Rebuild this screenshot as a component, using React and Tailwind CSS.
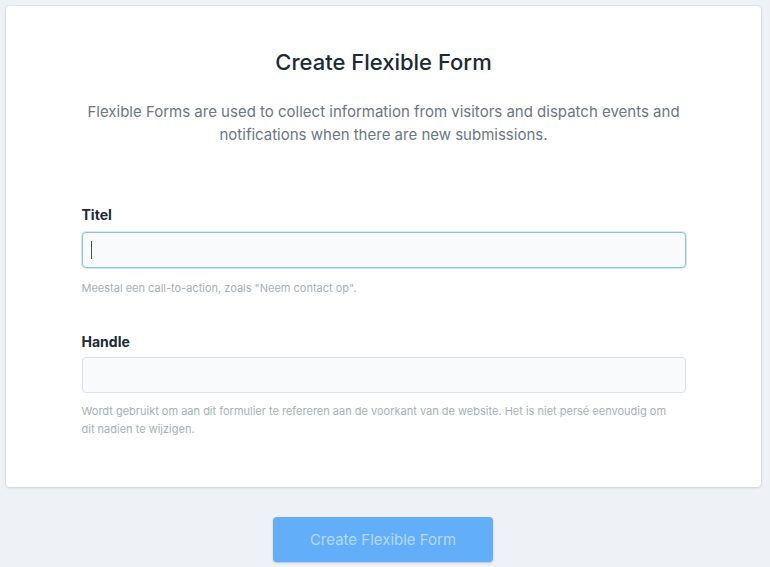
export default function App() {
  return (
    <div
      className="min-h-[567px] bg-[#eef1f5] pt-[6px] pb-[5px]"
      style={{ fontFamily: "Inter, 'Noto Sans', sans-serif" }}
    >
      <div className="ml-[6px] w-[755px] rounded-[4px] bg-white shadow-[0_0_0_1px_rgba(40,60,80,0.06),0_1px_3px_rgba(40,60,80,0.12)] pt-[41px] pb-[49px]">
        <div className="mx-auto w-[604px]">
          <h1 className="text-center text-[22px] leading-[30px] font-medium text-[#1c2a36]">
            Create Flexible Form
          </h1>
          <p className="mt-[23px] text-center text-[15px] leading-[23px] text-[#6b7785]">
            Flexible Forms are used to collect information from visitors and dispatch events and
            notifications when there are new submissions.
          </p>

          <div className="mt-[59px]">
            <label className="block text-[14px] leading-[20px] font-bold text-[#1c2a36]">
              Titel
            </label>
            <div className="mt-[7px] flex h-[36px] items-center rounded-[4px] border border-[#8cc0e6] bg-[#f9fafc] px-[8px] shadow-[0_0_0_1px_rgba(140,192,230,0.35)]">
              <span className="h-[18px] w-[1px] bg-[#44505c]" />
            </div>
            <p className="mt-[12px] text-[11px] leading-[16px] text-[#a7b0ba]">
              Meestal een call-to-action, zoals "Neem contact op".
            </p>
          </div>

          <div className="mt-[36px]">
            <label className="block text-[14px] leading-[20px] font-bold text-[#1c2a36]">
              Handle
            </label>
            <div className="mt-[5px] h-[36px] rounded-[4px] border border-[#dbe1e7] bg-[#f9fafc]" />
            <p className="mt-[9px] pr-[14px] text-[11px] leading-[18px] text-[#a7b0ba]">
              Wordt gebruikt om aan dit formulier te refereren aan de voorkant van de website. Het is niet persé eenvoudig om
              dit nadien te wijzigen.
            </p>
          </div>
        </div>
      </div>

      <div className="mt-[30px] flex justify-center pr-[4px]">
        <button className="h-[45px] w-[220px] rounded-[4px] bg-[#62aef8] pt-[2px] text-[15px] text-[#b4d9fd] shadow-[0_1px_2px_rgba(40,90,150,0.3)]">
          Create Flexible Form
        </button>
      </div>
    </div>
  );
}
